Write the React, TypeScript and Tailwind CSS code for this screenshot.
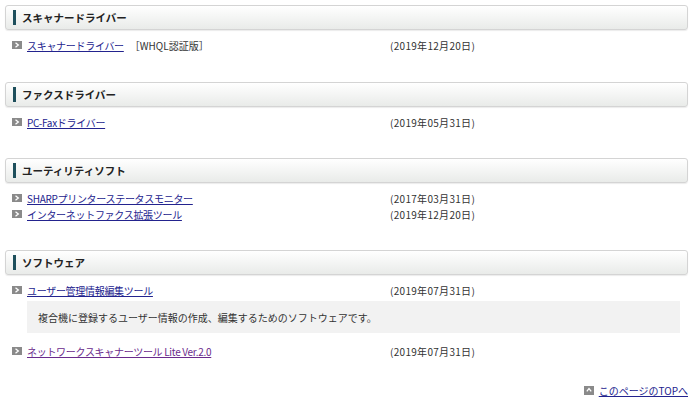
import React from "react";

const font = { fontFamily: '"Noto Sans CJK JP", "Noto Sans", sans-serif' };

function Bullet() {
  return (
    <span className="inline-flex h-[8px] w-[10px] shrink-0 items-center justify-center bg-[#8a8a8a]">
      <svg width="6" height="6" viewBox="0 0 6 6">
        <path d="M1.5 0.8 L4.3 3 L1.5 5.2" stroke="#fff" strokeWidth="1.3" fill="none" />
      </svg>
    </span>
  );
}

function Header({ title }: { title: string }) {
  return (
    <div className="mx-[5px] flex h-[25px] items-center rounded-[3px] border border-[#d4d4d4] bg-gradient-to-b from-[#ffffff] to-[#e9ebe9] pl-[7px] shadow-[0_1px_1px_rgba(0,0,0,0.08)]">
      <span className="h-[15px] w-[3px] bg-[#1e4f5c]" />
      <span className="ml-[6px] text-[10.5px] font-bold text-[#222]">{title}</span>
    </div>
  );
}

function Item({ label, extra, date, visited }: { label: string; extra?: string; date: string; visited?: boolean }) {
  return (
    <div className="flex h-[16px] items-center pl-[12px] text-[10px]">
      <div className="flex w-[378px] items-center">
        <Bullet />
        <a className={"ml-[5px] tracking-[-0.3px] underline " + (visited ? "text-[#6a2a8c]" : "text-[#23238e]")}>{label}</a>
        {extra && <span className="ml-[6px] text-[#333]">{extra}</span>}
      </div>
      <span className="tracking-[0.3px] text-[#333]">{date}</span>
    </div>
  );
}

export default function App() {
  return (
    <div className="h-[409px] w-[693px] bg-white" style={font}>
      <div className="pt-[5px]">
        <Header title="スキャナードライバー" />
        <div className="pt-[7px]">
          <Item label="スキャナードライバー" extra="［WHQL認証版］" date="(2019年12月20日)" />
        </div>
      </div>
      <div className="pt-[29px]">
        <Header title="ファクスドライバー" />
        <div className="pt-[7px]">
          <Item label="PC-Faxドライバー" date="(2019年05月31日)" />
        </div>
      </div>
      <div className="pt-[28px]">
        <Header title="ユーティリティソフト" />
        <div className="flex flex-col pt-[7px]">
          <Item label="SHARPプリンターステータスモニター" date="(2017年03月31日)" />
          <Item label="インターネットファクス拡張ツール" date="(2019年12月20日)" />
        </div>
      </div>
      <div className="pt-[28px]">
        <Header title="ソフトウェア" />
        <div className="pt-[7px]">
          <Item label="ユーザー管理情報編集ツール" date="(2019年07月31日)" />
          <div className="ml-[27px] mr-[13px] mt-[3px] flex h-[32px] items-center bg-[#f2f2f2] pl-[11px] text-[10px] text-[#333]">
            複合機に登録するユーザー情報の作成、編集するためのソフトウェアです。
          </div>
          <div className="pt-[10px]">
            <Item label="ネットワークスキャナーツール Lite Ver.2.0" date="(2019年07月31日)" visited />
          </div>
        </div>
      </div>
      <div className="flex h-[16px] items-center justify-end pr-[5px] mt-[23px] text-[10px]">
        <span className="inline-flex h-[9px] w-[10px] items-center justify-center bg-[#8a8a8a]">
          <svg width="6" height="6" viewBox="0 0 6 6">
            <path d="M0.8 4.3 L3 1.5 L5.2 4.3" stroke="#fff" strokeWidth="1.3" fill="none" />
          </svg>
        </span>
        <a className="ml-[5px] text-[#23238e] underline">このページのTOPへ</a>
      </div>
    </div>
  );
}
